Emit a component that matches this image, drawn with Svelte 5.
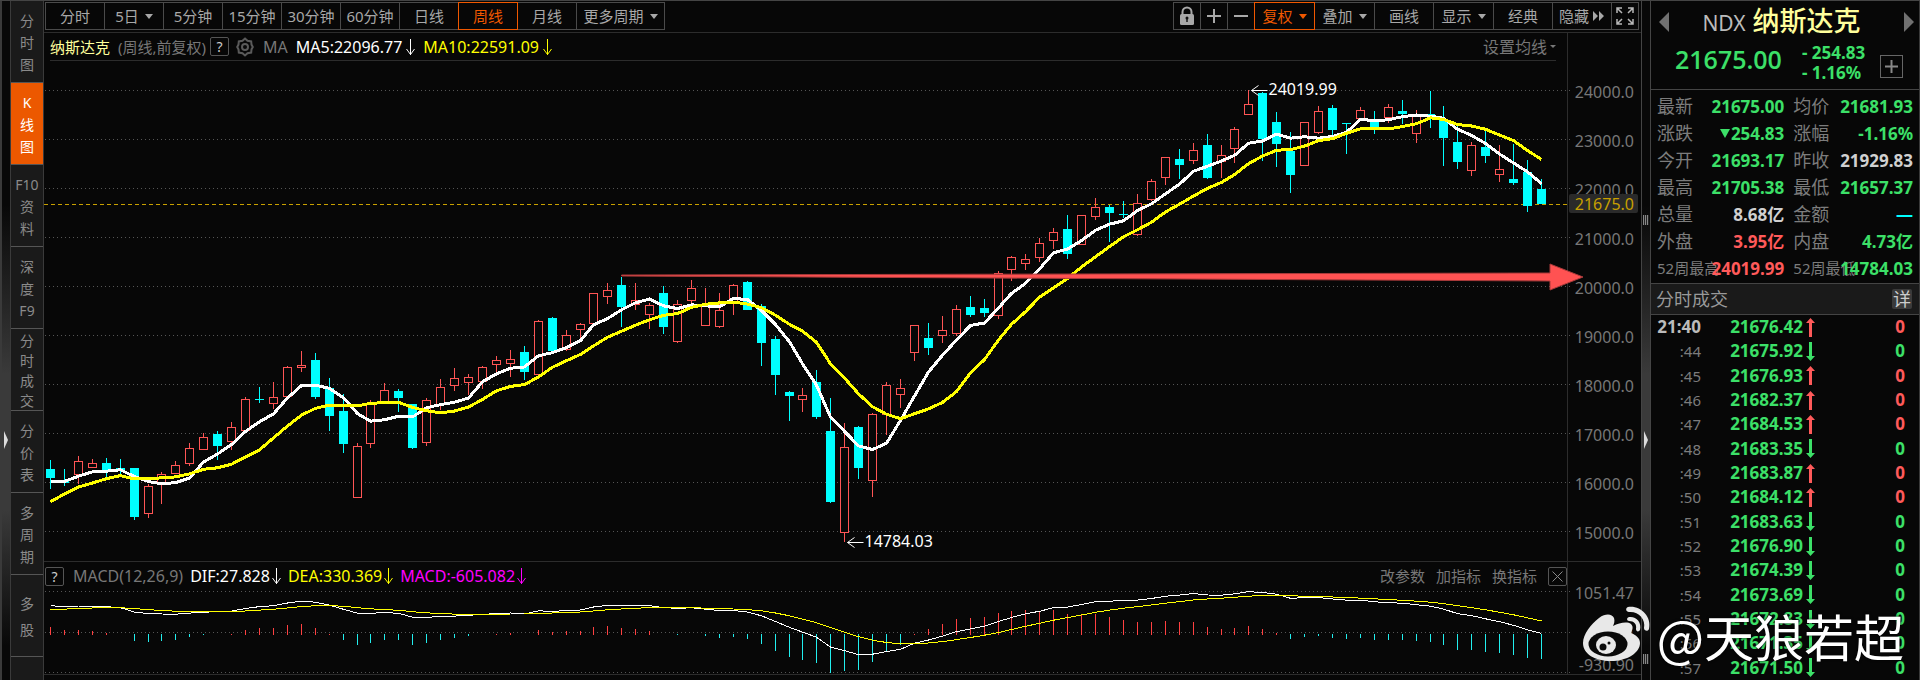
<script lang="ts">
  type Candle = [number, number, number, number, number];

  const periods = ['分时', '5日', '5分钟', '15分钟', '30分钟', '60分钟', '日线', '周线', '月线', '更多周期'];
  const sideTabs = [
    ['分', '时', '图'], ['K', '线', '图'], ['F10', '资', '料'], ['深', '度', 'F9'],
    ['分', '时', '成', '交'], ['分', '价', '表'], ['多', '周', '期'], ['多', '股'],
  ];

  let period = $state('周线');
  let side = $state(1);
  let width = $state(1597);

  // up (1) or down (0), high, body top, body bottom, low
  const candles: Candle[] = [
    [0, 460, 469, 478, 489], [0, 469, 480, 483, 486], [1, 456, 461, 474, 484], [1, 459, 463, 467, 468],
    [0, 458, 463, 471, 477], [0, 459, 468, 471, 474], [0, 468, 468, 517, 520], [1, 484, 486, 513, 518],
    [1, 472, 474, 482, 504], [1, 461, 465, 473, 473], [1, 443, 448, 463, 466], [1, 433, 437, 449, 449],
    [0, 431, 434, 446, 460], [1, 422, 427, 441, 450], [1, 397, 399, 430, 430], [0, 387, 399, 400, 403],
    [1, 382, 397, 403, 409], [1, 366, 367, 396, 396], [1, 351, 365, 367, 372], [0, 353, 360, 397, 399],
    [0, 378, 388, 416, 431], [0, 394, 411, 444, 453], [1, 443, 446, 497, 497], [1, 400, 403, 443, 448],
    [1, 383, 390, 401, 401], [0, 389, 391, 398, 412], [0, 404, 404, 448, 449], [1, 398, 400, 442, 446],
    [1, 379, 387, 404, 410], [1, 368, 378, 385, 391], [1, 374, 377, 382, 395], [1, 366, 367, 381, 389],
    [1, 356, 360, 364, 373], [1, 350, 359, 363, 377], [0, 346, 352, 372, 380], [1, 320, 321, 374, 376],
    [0, 317, 318, 351, 351], [1, 330, 335, 349, 351], [1, 323, 324, 329, 338], [1, 293, 293, 323, 325],
    [1, 283, 290, 296, 304], [0, 277, 285, 307, 327], [1, 283, 300, 304, 310], [1, 303, 305, 314, 329],
    [0, 286, 293, 327, 334], [1, 300, 304, 341, 343], [1, 280, 288, 300, 304], [1, 288, 305, 325, 325],
    [1, 293, 310, 326, 328], [1, 284, 285, 302, 315], [0, 281, 282, 310, 310], [0, 304, 306, 343, 366],
    [0, 336, 339, 375, 395], [0, 391, 392, 396, 421], [1, 388, 395, 399, 412], [0, 370, 382, 417, 419],
    [0, 398, 431, 502, 503], [1, 423, 447, 532, 542], [0, 426, 427, 468, 479], [1, 413, 414, 480, 497],
    [1, 382, 385, 414, 435], [1, 379, 388, 394, 408], [1, 325, 325, 352, 361], [0, 323, 338, 348, 355],
    [1, 316, 330, 335, 343], [1, 305, 309, 333, 336], [0, 296, 307, 315, 317], [0, 299, 308, 313, 317],
    [1, 271, 273, 315, 319], [1, 256, 257, 269, 281], [1, 254, 259, 263, 270], [1, 238, 243, 257, 262],
    [1, 228, 232, 240, 249], [0, 215, 229, 254, 259], [1, 215, 215, 244, 244], [1, 198, 207, 216, 220],
    [0, 205, 207, 213, 242], [0, 201, 214, 215, 218], [1, 194, 203, 234, 236], [1, 179, 181, 199, 201],
    [1, 157, 157, 177, 185], [0, 149, 159, 165, 179], [1, 143, 150, 160, 164], [0, 134, 145, 178, 179],
    [1, 145, 155, 161, 178], [1, 127, 129, 148, 163], [1, 90, 104, 114, 115], [0, 92, 93, 139, 161],
    [0, 112, 122, 144, 167], [0, 132, 151, 175, 193], [1, 122, 122, 165, 165], [1, 106, 111, 132, 134],
    [0, 105, 108, 130, 135], [0, 123, 123, 124, 154], [1, 107, 110, 118, 120], [0, 111, 119, 128, 134],
    [1, 104, 107, 117, 123], [0, 100, 111, 114, 124], [1, 110, 116, 133, 143], [0, 91, 114, 116, 128],
    [0, 106, 120, 138, 166], [0, 126, 142, 162, 169], [1, 142, 145, 170, 176], [0, 130, 147, 156, 163],
    [1, 145, 169, 174, 182], [0, 144, 179, 183, 185], [0, 160, 172, 206, 212], [0, 179, 189, 204, 204],
  ];
  // closes of the nine weeks before the first candle
  const earlier = [560, 531, 503, 514, 502, 483, 487, 485, 474];

  const macdBars = [
    8, 5, 5, 4, 2, 0, -7, -8, -7, -6, -3, -1, 0, 1, 5, 7, 7, 10, 11, 7, 1, -6, -11, -9, -6, -6, -11,
    -9, -6, -4, -2, 0, 1, 2, 0, 5, 3, 4, 4, 8, 9, 7, 6, 4, 0, -1, 0, -2, -4, -3, -5, -10, -17, -23,
    -26, -29, -39, -37, -36, -28, -18, -11, 1, 6, 11, 16, 17, 18, 22, 24, 25, 24, 25, 21, 21, 21, 18,
    15, 13, 13, 14, 13, 13, 8, 6, 7, 9, 6, 2, -5, -3, -2, -4, -5, -4, -6, -6, -6, -7, -8, -11, -16,
    -16, -18, -19, -21, -24, -25,
  ];

  const closes = [...earlier, ...candles.map((c) => (c[0] ? c[2] : c[3]))];
  const prices = Array.from({ length: 10 }, (_, i) => 24000 - i * 1000);

  let axisX = $derived(width - 74);
  let pitch = $derived((width - 106) / (candles.length - 1));

  function cx(i: number): number {
    return Math.round(6 + pitch * i) + 0.5;
  }

  function line(ys: number[]): string {
    return ys.map((y, i) => `${cx(i)},${y.toFixed(1)}`).join(' ');
  }

  function average(n: number): number[] {
    return candles.map((_, i) => {
      const end = i + earlier.length + 1;
      return closes.slice(end - n, end).reduce((a, b) => a + b, 0) / n;
    });
  }

  const ma5 = average(5);
  const ma10 = average(10);

  // the signal line moves by an eighth of each bar
  let level = 610.7;
  const dea = macdBars.map((b) => (level -= b / 8));
  const dif = dea.map((y, i) => y - macdBars[i] / 2);

  const stats = [
    ['最新', '21675.00', 'down', '均价', '21681.93', 'down'],
    ['涨跌', '254.83', 'down fell', '涨幅', '-1.16%', 'down'],
    ['今开', '21693.17', 'down', '昨收', '21929.83', 'flat'],
    ['最高', '21705.38', 'down', '最低', '21657.37', 'down'],
    ['总量', '8.68亿', 'flat', '金额', '—', 'none'],
    ['外盘', '3.95亿', 'up', '内盘', '4.73亿', 'down'],
    ['52周最高', '24019.99', 'up', '52周最低', '14784.03', 'down'],
  ];

  const ticks: [string, string, boolean][] = [
    ['21:40', '21676.42', true], [':44', '21675.92', false], [':45', '21676.93', true],
    [':46', '21682.37', true], [':47', '21684.53', true], [':48', '21683.35', false],
    [':49', '21683.87', true], [':50', '21684.12', true], [':51', '21683.63', false],
    [':52', '21676.90', false], [':53', '21674.39', false], [':54', '21673.69', false],
    [':55', '21672.83', false], [':56', '21671.35', false], [':57', '21671.50', false],
  ];
</script>

{#snippet fall()}
  <svg class="fall" width="9" height="18" viewBox="0 0 9 18"><path d="M4.5 1v16M.5 11l4 5.500 4-5.500" /></svg>
{/snippet}

<div class="app">
  <div class="splitter left"><i class="handle"></i></div>

  <nav class="side">
    {#each sideTabs as tab, i}
      <button class:active={side === i} class:four={tab.length === 4} class:two={tab.length === 2} onclick={() => (side = i)}>
        {#each tab as ch}<span>{ch}</span>{/each}
      </button>
    {/each}
  </nav>

  <main>
    <div class="toolbar">
      <div class="group">
        {#each periods as p}
          <button class:active={period === p} class:wide={p === '更多周期'} onclick={() => (period = p)}>
            {p}{#if p === '5日' || p === '更多周期'}<i class="caret"></i>{/if}
          </button>
        {/each}
      </div>
      <div class="group tools">
        <button class="icon" aria-label="锁定">
          <svg width="18" height="20" viewBox="0 0 18 20">
            <path d="M4.500 9V6a4.500 4.500 0 0 1 9 0v3" fill="none" stroke="#a8a8a8" stroke-width="2" />
            <rect x="2" y="8" width="14" height="11" rx="1.500" fill="#a8a8a8" />
            <circle cx="9" cy="12" r="1.500" fill="#111" /><path d="M8.300 12h1.400v4H8.300z" fill="#111" />
          </svg>
        </button>
        <button class="icon" aria-label="放大">
          <svg width="14" height="14" viewBox="0 0 14 14"><path d="M7 0v14M0 7h14" stroke="#a8a8a8" stroke-width="2" /></svg>
        </button>
        <button class="icon" aria-label="缩小">
          <svg width="14" height="14" viewBox="0 0 14 14"><path d="M0 7h14" stroke="#a8a8a8" stroke-width="2" /></svg>
        </button>
        <button class="menu active">复权<i class="caret"></i></button>
        <button class="menu">叠加<i class="caret"></i></button>
        <button>画线</button>
        <button class="menu">显示<i class="caret"></i></button>
        <button>经典</button>
        <button class="hide">隐藏<svg width="12" height="10" viewBox="0 0 12 10"><path d="M0 0l5 5-5 5zM6 0l5 5-5 5z" fill="#a8a8a8" /></svg></button>
        <button class="icon" aria-label="全屏">
          <svg width="18" height="18" viewBox="0 0 18 18" fill="none" stroke="#b8b8b8" stroke-width="1.500">
            <path d="M1 6V1h5M1 1l5 5M12 1h5v5M17 1l-5 5M1 12v5h5M1 17l5-5M12 17h5v-5M17 17l-5-5" />
          </svg>
        </button>
      </div>
    </div>

    <div class="legend">
      <span class="name">纳斯达克</span>
      <span class="dim period">(周线,前复权)</span>
      <button class="box" aria-label="帮助">?</button>
      <button class="gear" aria-label="设置">
        <svg width="20" height="20" viewBox="0 0 20 20" fill="none" stroke="#5a5a5a" stroke-width="2">
          <path d="M10 1.500l2.500 2.200 3.700.7.300 3.200 1.300 2.400-1.300 2.400-.3 3.200-3.700.7L10 18.500l-2.500-2.200-3.700-.7-.3-3.200L2.200 10l1.300-2.400.3-3.200 3.700-.7z" />
          <circle cx="10" cy="10" r="3" />
        </svg>
      </button>
      <span class="dim">MA</span>
      <span class="white">MA5:22096.77{@render fall()}</span>
      <span class="yellow">MA10:22591.09{@render fall()}</span>
      <button class="link dim">设置均线<i class="caret small"></i></button>
    </div>

    <div class="pane" bind:clientWidth={width}>
      <svg width="100%" height="500">
        <g transform="translate(0 -61)">
          {#each prices as p, i}
            <line class="grid" x1="1" x2={width - 70} y1={90.5 + i * 49} y2={90.5 + i * 49} />
            <text class="axis" x={width - 7} y={98 + i * 49}>{p}.0</text>
          {/each}
          <line class="rule" x1={axisX + 0.5} x2={axisX + 0.5} y1="33" y2="561" />
          <line class="last" x1="0" x2={axisX} y1="204.500" y2="204.500" />

          {#each candles as [up, high, top, bottom, low], i}
            {#if up}
              <path class="red" d={`M${cx(i)} ${high}V${top}M${cx(i)} ${bottom}V${low}`} />
              <rect class="red" x={cx(i) - 4} y={top + 0.5} width="8" height={Math.max(bottom - top, 1)} />
            {:else}
              <rect class="cyan" x={cx(i) - 0.5} y={high} width="1" height={low - high} />
              <rect class="cyan" x={cx(i) - 4.5} y={top} width="9" height={bottom - top} />
            {/if}
          {/each}

          <polyline class="ma" points={line(ma5)} stroke="#fff" />
          <polyline class="ma" points={line(ma10)} stroke="#ff0" />

          <g class="mark">
            <path d={`M${cx(86) + 3} 90.500h16m-9-5l-7 5 7 5`} />
            <text x={cx(86) + 20} y="95">24019.99</text>
            <path d={`M${cx(57) + 3} 542.500h16m-9-5l-7 5 7 5`} />
            <text x={cx(57) + 20} y="547">14784.03</text>
          </g>

          <rect x={width - 72} y="194" width="69" height="19" rx="2" fill="#2a2a2a" />
          <text class="axis gold" x={width - 7} y="210">21675.0</text>

          <path
            class="trend"
            d={`M${cx(41)} 275L${axisX - 17} 273V264L${axisX + 16} 277L${axisX - 17} 290V281L${cx(41)} 276z`}
          />
        </g>
      </svg>
    </div>

    <section class="macd">
      <div class="legend sub">
        <button class="box" aria-label="指标帮助">?</button>
        <span class="dim">MACD(12,26,9)</span>
        <span class="white">DIF:27.828{@render fall()}</span>
        <span class="yellow">DEA:330.369{@render fall()}</span>
        <span class="magenta">MACD:-605.082{@render fall()}</span>
        <div class="actions">
          <button class="dim">改参数</button>
          <button class="dim">加指标</button>
          <button class="dim">换指标</button>
          <button class="box" aria-label="关闭">
            <svg width="11" height="11" viewBox="0 0 11 11"><path d="M.5.5l10 10M10.500.5l-10 10" stroke="#888" /></svg>
          </button>
        </div>
      </div>
      <svg width="100%" height="85">
        <g transform="translate(0 -590)">
          {#each [591.5, 632.5, 672.5] as y}
            <line class="grid" x1="1" x2={width - 70} y1={y} y2={y} />
          {/each}
          <line class="rule" x1={axisX + 0.5} x2={axisX + 0.5} y1="562" y2="674" />
          <text class="axis" x={width - 7} y="599">1051.47</text>
          <text class="axis" x={width - 7} y="640">48.34</text>
          <text class="axis" x={width - 7} y="671">-930.90</text>
          {#each macdBars as b, i}
            {#if b > 0}
              <rect x={cx(i) - 0.5} y={635 - b} width="1" height={b} fill="#ff4040" />
            {:else if b < 0}
              <rect x={cx(i) - 0.5} y="634" width="1" height={-b} fill="#2ee" />
            {/if}
          {/each}
          <polyline class="thin" points={line(dif)} stroke="#fff" />
          <polyline class="thin" points={line(dea)} stroke="#ff0" />
        </g>
      </svg>
    </section>
  </main>

  <div class="splitter right">
    <i class="grip"></i><i class="handle"></i><i class="grip"></i>
  </div>

  <aside>
    <header>
      <div class="title">
        <button aria-label="上一个"><svg width="10" height="20" viewBox="0 0 10 20"><path d="M10 0v20L0 10z" fill="#707070" /></svg></button>
        <h1><small>NDX</small> 纳斯达克</h1>
        <button aria-label="下一个"><svg width="10" height="20" viewBox="0 0 10 20"><path d="M0 0v20l10-10z" fill="#707070" /></svg></button>
      </div>
      <div class="quote">
        <strong>21675.00</strong>
        <div class="change"><span>- 254.83</span><span>- 1.16%</span></div>
        <button class="add" aria-label="加自选">
          <svg width="13" height="13" viewBox="0 0 13 13"><path d="M6.500 0v13M0 6.500h13" stroke="#888" stroke-width="2" /></svg>
        </button>
      </div>
    </header>

    <dl>
      {#each stats as [k1, v1, c1, k2, v2, c2]}
        <dt class:long={k1.length > 2}>{k1}</dt>
        <dd class={c1}>{v1}</dd>
        <dt class="second" class:long={k2.length > 2}>{k2}</dt>
        <dd class={c2}>{v2}</dd>
      {/each}
    </dl>

    <div class="section">
      <h2>分时成交</h2>
      <button>详</button>
    </div>

    <table>
      <tbody>
        {#each ticks as [time, price, up], i}
          <tr>
            <td class="time" class:full={i === 0}>{time}</td>
            <td class="price">{price}</td>
            <td class="dir" class:up>
              <svg width="9" height="19" viewBox="0 0 9 19">
                <path d={up ? 'M3 19V5H0l4.500-5L9 5H6v14z' : 'M3 0v14H0l4.500 5L9 14H6V0z'} />
              </svg>
            </td>
            <td class="vol" class:up>0</td>
          </tr>
        {/each}
      </tbody>
    </table>
  </aside>

  <div class="watermark">
    <svg width="68" height="58" viewBox="0 0 68 58">
      <g fill="#e8e8e8">
        <path d="M0 37C0 28 8 18 16 12 23 7 29 8 31 12c1 3 0 6-1 8 6-3 14-5 18-2 3 3 1 6 0 9 5 2 9 5 9 10 0 10-13 18-29 18C12 55 0 48 0 37z" />
        <path d="M45 1c12-2 24 9 21 22-1 3-5 2-5-1C63 13 55 5 46 6c-3 0-4-4-1-5z" />
        <path d="M46 11c7-1 13 5 11 13-1 2-4 2-4-1 1-5-2-8-7-8-2 0-3-3 0-4z" />
      </g>
      <ellipse cx="25" cy="38" rx="19.500" ry="12.500" fill="#0a0a0a" />
      <ellipse cx="23" cy="39" rx="10" ry="9" fill="#e8e8e8" />
      <circle cx="20" cy="41" r="3.500" fill="#0a0a0a" />
      <circle cx="26" cy="37" r="1.500" fill="#0a0a0a" />
    </svg>
    <span>@天狼若超</span>
  </div>
</div>

<style>
  :global(body) {
    background: #070707;
    overflow-x: hidden;
  }
  .app {
    position: relative;
    display: flex;
    min-height: 100vh;
    box-sizing: border-box;
    border-top: 1px solid #444;
    background: #070707;
    color: #a8a8a8;
    font: 15px/20px "Noto Sans", "Noto Sans CJK SC", sans-serif;
  }
  button {
    margin: 0;
    padding: 0;
    border: none;
    background: none;
    color: inherit;
    font: inherit;
    white-space: nowrap;
    cursor: pointer;
  }
  svg { display: block; overflow: visible; flex-shrink: 0; }

  .splitter {
    position: relative;
    width: 10px;
    box-sizing: border-box;
    flex-shrink: 0;
    background: linear-gradient(#080808 30%, #3a3a3a 55%, #3a3a3a 75%, #080808 95%);
  }
  .left { border-left: 2px solid #3a3a3a; }
  .right { border: 1px solid #444; border-width: 0 1px; }
  .handle {
    position: absolute;
    top: 430px;
    left: 2px;
    border: 9px solid transparent;
    border-width: 9px 0 9px 4px;
    border-left-color: #ddd;
  }
  .grip {
    position: absolute;
    top: 214px;
    left: 1px;
    width: 6px;
    height: 10px;
    background: repeating-linear-gradient(90deg, #888 0 1px, #222 1px 2px);
  }
  .grip:last-child { top: 653px; }

  .side {
    width: 34px;
    box-sizing: border-box;
    flex-shrink: 0;
    background: #1a1a1a;
    border: 1px solid #3a3a3a;
    border-width: 0 1px;
    color: #8a8a8a;
  }
  .side button {
    display: flex;
    flex-direction: column;
    align-items: center;
    justify-content: center;
    width: 100%;
    height: 82px;
    padding-top: 2px;
    border-bottom: 1px solid #555;
    font-size: 14px;
    line-height: 22px;
  }
  .side .four { line-height: 20px; }
  .side .two { line-height: 26px; }
  .side .active { background: #ec5800; color: #fff; }

  main { flex: 1; min-width: 0; }
  .toolbar {
    display: flex;
    justify-content: space-between;
    padding: 1px 2px 2px 1px;
    border-bottom: 1px solid #2c2c2c;
  }
  .group { display: flex; padding-left: 1px; }
  .group button {
    display: flex;
    align-items: center;
    justify-content: center;
    gap: 6px;
    width: 60px;
    height: 28px;
    box-sizing: border-box;
    margin-left: -1px;
    border: 1px solid #4a4a4a;
  }
  .group .wide { width: 89px; }
  .group .icon { width: 28px; }
  .group .menu { width: 61px; }
  .tools .hide { gap: 4px; }
  .group .active { position: relative; border-color: #f05800; color: #f05800; }
  .caret {
    border: 4px solid transparent;
    border-top: 5px solid currentColor;
    border-bottom: 0;
  }
  .small { border-width: 3px 3px 0; }

  .legend {
    display: flex;
    align-items: center;
    height: 27px;
    margin: 0 85px 0 6px;
    border-bottom: 1px solid #2c2c2c;
    font-size: 16px;
    white-space: nowrap;
  }
  .legend span { display: flex; align-items: center; gap: 4px; margin-right: 8px; }
  .legend .name, .legend .period { font-size: 15px; }
  .legend .period { margin-right: 4px; }
  .name { color: #ffff9c; }
  .dim { color: #777; }
  .white { color: #fff; }
  .yellow { color: #ff0; }
  .magenta { color: #f0f; }
  .fall { fill: none; stroke: currentColor; stroke-width: 1; }
  .box {
    display: flex;
    align-items: center;
    justify-content: center;
    width: 19px;
    height: 19px;
    box-sizing: border-box;
    border: 1px solid #555;
    border-radius: 2px;
    color: #ccc;
    font-size: 14px;
    line-height: 17px;
  }
  .gear { margin: 0 8px 0 6px; }
  .link { display: flex; align-items: center; gap: 3px; margin-left: auto; }

  .grid { stroke: #555; stroke-dasharray: 1 3; }
  .rule { stroke: #2c2c2c; }
  .last { stroke: #c8a000; stroke-dasharray: 4 3; }
  .axis { fill: #777; font-size: 16px; text-anchor: end; }
  .gold { fill: #c8a000; }
  .red { fill: #070707; stroke: #ff5555; }
  .cyan { fill: #0ff; }
  .ma { fill: none; stroke-width: 3; stroke-linejoin: round; shape-rendering: crispEdges; }
  .thin { fill: none; stroke-width: 1; shape-rendering: crispEdges; }
  .mark path { fill: none; stroke: #fff; }
  .mark text { fill: #fff; font-size: 16px; }
  .trend { fill: #ff5252; stroke: #a83a3a; stroke-width: 1; }

  .macd { border: 1px solid #2c2c2c; border-width: 1px 0; }
  .sub { height: 28px; margin: 0 74px 0 1px; border: none; }
  .sub > .box { margin-right: 9px; }
  .sub span { gap: 2px; margin-right: 7px; }
  .macd > svg { margin-bottom: -1px; }
  .actions { display: flex; align-items: center; gap: 11px; margin-left: auto; font-size: 15px; }

  aside {
    display: flex;
    flex-direction: column;
    width: 269px;
    box-sizing: border-box;
    flex-shrink: 0;
    border-right: 1px solid #3a3a3a;
  }
  header { height: 88px; border-bottom: 1px solid #444; }
  .title { display: flex; align-items: center; justify-content: space-between; height: 42px; padding: 0 5px 0 8px; }
  h1 {
    margin: 0;
    padding-right: 10px;
    color: #ffff9c;
    font-size: 27px;
    font-weight: 500;
    line-height: 42px;
    white-space: nowrap;
  }
  small { color: #bbb; font-size: 21px; font-weight: 400; }
  .quote { display: flex; align-items: flex-start; padding: 0 16px 0 24px; color: #3ce068; }
  .quote strong { font: 600 25px/32px "Open Sans", "Noto Sans", sans-serif; }
  .change {
    display: flex;
    flex-direction: column;
    margin-left: 20px;
    font-size: 17px;
    font-weight: 700;
  }
  .add {
    display: flex;
    align-items: center;
    justify-content: center;
    width: 23px;
    height: 23px;
    box-sizing: border-box;
    margin: 12px 0 0 auto;
    border: 1px solid #666;
  }

  dl {
    display: grid;
    grid-template-columns: 36px 12fr 45px 11fr;
    grid-auto-rows: 27px;
    align-items: center;
    margin: 0;
    padding: 3px 6px 1px;
    border-bottom: 1px solid #444;
    line-height: 27px;
    white-space: nowrap;
  }
  dt { width: 36px; color: #7c7c7c; font-size: 18px; }
  .second { padding-left: 9px; }
  .long { font-size: 15px; }
  dd { margin: 0; font-size: 17px; font-weight: 700; text-align: right; }
  .down { color: #3ce068; }
  .up { color: #ff5a5a; }
  .flat { color: #d0d0d0; }
  .none { color: #0ff; }
  .fell::before {
    content: "";
    display: inline-block;
    margin-right: 1px;
    border: 5px solid transparent;
    border-top: 9px solid currentColor;
    border-bottom: 0;
    vertical-align: 2px;
  }

  .section {
    display: flex;
    align-items: center;
    justify-content: space-between;
    height: 30px;
    padding: 0 7px 0 5px;
    border-bottom: 1px solid #444;
    background: #1a1a1a;
  }
  h2 { margin: 0; color: #999; font-size: 18px; font-weight: 400; }
  .section button { width: 20px; height: 20px; border-radius: 2px; background: #3a3a3a; color: #ccc; font-size: 18px; line-height: 20px; }

  table { display: flex; flex: 1; }
  tbody { display: flex; flex: 1; flex-direction: column; }
  tr {
    display: grid;
    flex: 1;
    grid-template-columns: 50px 102px 12px 1fr;
    align-items: center;
    padding-right: 14px;
  }
  td { padding: 0; color: #3ce068; font-size: 17px; font-weight: 700; text-align: right; }
  .time { color: #7c7c7c; font-size: 15px; font-weight: 400; }
  .full { color: #bbb; font-size: 17px; font-weight: 700; }
  td.up { color: #ff5a5a; }
  .dir svg { margin-left: auto; fill: currentColor; }

  .watermark {
    position: absolute;
    right: 16px;
    bottom: 9px;
    display: flex;
    align-items: center;
    gap: 6px;
    color: #fff;
    font: 50px/72px "Noto Sans CJK SC", sans-serif;
    text-shadow: 0 0 3px #000;
    pointer-events: none;
  }
</style>
